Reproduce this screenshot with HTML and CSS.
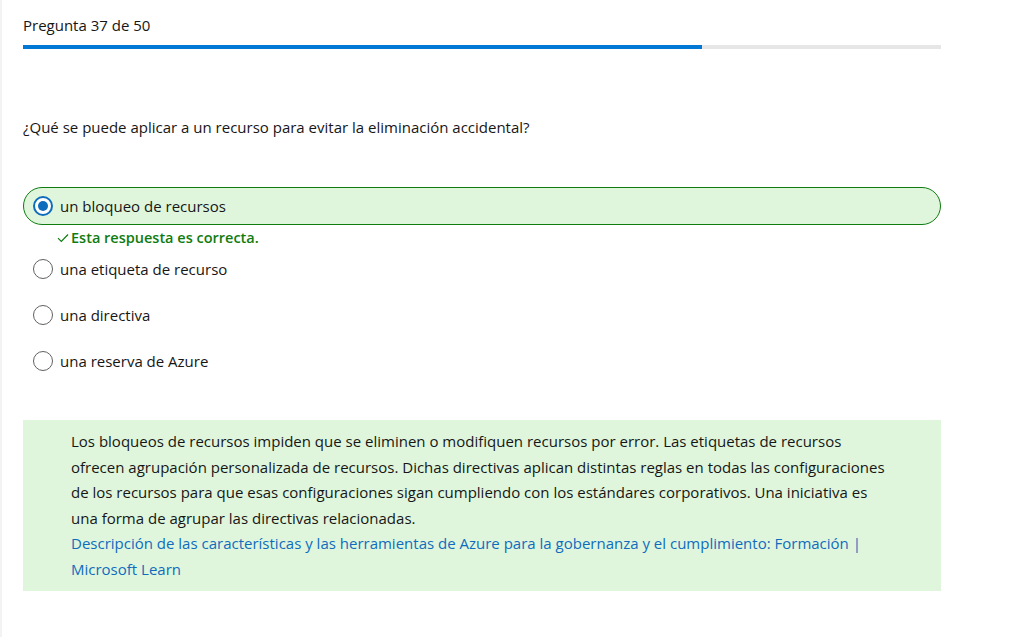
FILE: index.html
```html
<!DOCTYPE html>
<html lang="es">
<head>
<meta charset="utf-8">
<link rel="stylesheet" href="styles.css">
</head>
<body>
<div class="page">
  <main class="panel">
    <div class="counter">Pregunta 37 de 50</div>
    <div class="progress"><div class="progress-fill" style="width: 74%"></div></div>
    <p class="question">¿Qué se puede aplicar a un recurso para evitar la eliminación accidental?</p>
    <div class="options">
      <label class="option selected">
        <span class="radio checked"></span>
        <span class="opt-text">un bloqueo de recursos</span>
      </label>
      <div class="feedback">
        <svg class="check" width="12" height="10" viewBox="0 0 12 10"><path d="M1 5.2 L4.3 8.5 L11 1.5" fill="none" stroke="#107c10" stroke-width="1.2"/></svg>
        <span>Esta respuesta es correcta.</span>
      </div>
      <label class="option">
        <span class="radio"></span>
        <span class="opt-text">una etiqueta de recurso</span>
      </label>
      <label class="option">
        <span class="radio"></span>
        <span class="opt-text">una directiva</span>
      </label>
      <label class="option">
        <span class="radio"></span>
        <span class="opt-text">una reserva de Azure</span>
      </label>
    </div>
    <div class="explanation">
      <p>Los bloqueos de recursos impiden que se eliminen o modifiquen recursos por error. Las etiquetas de recursos ofrecen agrupación personalizada de recursos. Dichas directivas aplican distintas reglas en todas las configuraciones de los recursos para que esas configuraciones sigan cumpliendo con los estándares corporativos. Una iniciativa es una forma de agrupar las directivas relacionadas.<br><a href="#">Descripción de las características y las herramientas de Azure para la gobernanza y el cumplimiento: Formación | Microsoft Learn</a></p>
    </div>
  </main>
  <aside class="side"></aside>
</div>
</body>
</html>
```
FILE: styles.css
```css
* { box-sizing: border-box; }
html, body { margin: 0; padding: 0; background: #fff; }
body {
  font-family: "Segoe UI", "Open Sans", "Noto Sans", sans-serif;
  color: #161616;
  height: 637px;
  overflow: hidden;
}
.page {
  display: flex;
  height: 637px;
  padding-left: 2px;
  background: #f3f3f3;
}
.panel {
  width: 960px;
  background: #fff;
  padding: 14px 21px 0 21px;
  box-shadow: 1px 0 2px rgba(0,0,0,0.08);
}
.side { flex: 1; background: #fff; }
.counter {
  font-size: 15px;
  line-height: 22px;
  height: 22px;
}
.progress {
  margin-top: 9px;
  height: 4px;
  background: #e6e6e6;
}
.progress-fill { height: 100%; background: #0078d4; }
.question {
  margin: 67px 0 0;
  font-size: 15px;
  line-height: 22px;
}
.options { margin-top: 49px; display: flex; flex-direction: column; }
.option {
  display: flex;
  align-items: center;
  height: 38px;
  padding-left: 9px;
  border: 1px solid transparent;
  border-radius: 19px;
  font-size: 15px;
  margin-bottom: 8px;
}
.option.selected {
  background: #dff6dd;
  border-color: #107c10;
  margin-bottom: 0;
}
.radio {
  width: 20px;
  height: 20px;
  border: 1px solid #616161;
  border-radius: 50%;
  margin-right: 7px;
  flex: none;
  display: flex;
  align-items: center;
  justify-content: center;
  background: #fff;
}
.radio.checked { border: 2px solid #0f6cbd; }
.radio.checked::after {
  content: "";
  width: 10px;
  height: 10px;
  border-radius: 50%;
  background: #0f6cbd;
}
.feedback {
  display: flex;
  align-items: center;
  height: 25px;
  padding-left: 34px;
  font-size: 14.5px;
  font-weight: 600;
  color: #107c10;
  margin-bottom: 0;
}
.check { margin-right: 2px; }
.explanation {
  margin-top: 32px;
  background: #dff6dd;
  padding: 9px 48px 8px 48px;
}
.explanation p {
  margin: 0;
  font-size: 15px;
  line-height: 25.6px;
}
.explanation a { color: #0f6cbd; text-decoration: none; }
```
